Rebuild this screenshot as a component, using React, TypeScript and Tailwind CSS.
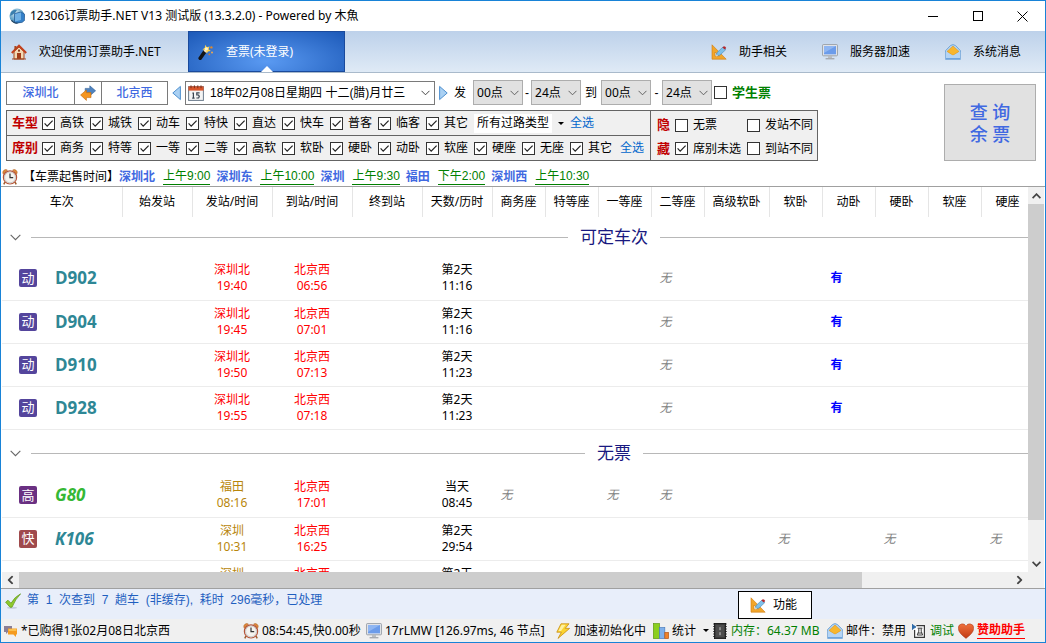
import React from 'react';

const UI_FONT = "font-['Noto_Sans','Noto_Sans_CJK_SC',sans-serif]";
const SONG_FONT = "font-['Liberation_Sans','Noto_Sans_CJK_SC',sans-serif]";

/* ---------- icons ---------- */

const GlobeIcon = () => (
  <svg className="size-4 shrink-0" viewBox="0 0 16 16">
    <defs>
      <radialGradient id="globe" cx="0.4" cy="0.3" r="0.8">
        <stop offset="0" stopColor="#d7ecf5" />
        <stop offset="0.6" stopColor="#5f9fc4" />
        <stop offset="1" stopColor="#1e5a8c" />
      </radialGradient>
    </defs>
    <circle cx="8" cy="8" r="7.5" fill="url(#globe)" />
    <path d="M2 4Q5 1 8 2L6 5 3 7 1 8Z" fill="#3b7fae" />
    <path d="M5.5 5.5 12 4l3.5 2v6.5L13 14.5l-7.5.3Z" fill="#3480c8" stroke="#1d4f86" strokeWidth="0.6" />
    <path d="M6 6 12 4.6V12L6 13.5Z" fill="#6fb0e4" />
    <path d="M3 12q2 3 6 3l-1 .8Q4 15.6 2 12.5Z" fill="#24415e" />
  </svg>
);

const HomeIcon = () => (
  <svg className="size-4 shrink-0" viewBox="0 0 16 16">
    <path d="M3 7.5 8 3l5 4.5V15H3Z" fill="#f3d9b4" stroke="#a8481f" strokeWidth="1" />
    <path d="M0.8 9 8 1.6 15.2 9" fill="none" stroke="#c2401c" strokeWidth="2" />
    <path d="M3.4 2h2v2.6l-2 2Z" fill="#a8481f" />
    <rect x="6" y="9" width="4" height="6" fill="#a33c18" />
    <rect x="7" y="5.6" width="2" height="2" fill="#8a3a1e" />
    <path d="M1 14.5h14v1H1Z" fill="#9c4a28" />
  </svg>
);

const WandIcon = () => (
  <svg className="size-4 shrink-0" viewBox="0 0 16 16">
    <path d="M2.2 14.2 7 7.4" stroke="#151515" strokeWidth="3.6" strokeLinecap="round" />
    <path d="M6.2 5.8 9 8" stroke="#f2e3c5" strokeWidth="2.4" />
    <path d="m7.2 0.8 1.6 2.4 2.8-.8-1 2.8 2.2 1.8-3 .4-.8 2L7.8 6 4.4 5.6l2.4-1.8Z" fill="#ffd24a" />
    <circle cx="8.4" cy="4.8" r="1.6" fill="#fff6cf" />
    <circle cx="13.4" cy="3.4" r="1.2" fill="#e08a2c" />
    <circle cx="14" cy="8.4" r="1" fill="#f0a94a" />
    <circle cx="11.4" cy="10.4" r="0.9" fill="#d8792a" />
  </svg>
);

const ToolsIcon = () => (
  <svg className="size-4 shrink-0" viewBox="0 0 16 16">
    <path d="M1 0.8 15.2 15.2H1Z M4 8v4.2h4.2Z" fill="#f2a62a" fillRule="evenodd" stroke="#cc7a12" strokeWidth="0.6" />
    <path d="m5.4 11.6.6-3L12 3l2.8 2.6-6 5.6Z" fill="#7fc0ea" stroke="#4186b8" strokeWidth="0.6" />
    <path d="m11.4 3.4 1.4-1.2q1.6-.2 2.4 1.8l-1.4 1.4Z" fill="#b3282d" />
    <path d="m5 12.4.6-2 1.4 1.4Z" fill="#f8e6c0" />
  </svg>
);

const MonitorIcon = () => (
  <svg className="size-4 shrink-0" viewBox="0 0 16 16">
    <rect x="0.6" y="0.6" width="14.8" height="11.2" rx="0.6" fill="#e9ebee" stroke="#9aa0a8" />
    <rect x="2" y="2" width="12" height="8.4" fill="#6c9cea" />
    <path d="M2 2h12L2 9Z" fill="#8fb6f2" />
    <path d="M6 12h4v2H6Z" fill="#b9bdc2" />
    <path d="M3.6 14h8.8v1.4H3.6Z" fill="#a6aab0" />
  </svg>
);

const MailIcon = () => (
  <svg className="size-4 shrink-0" viewBox="0 0 16 16">
    <path d="M0.6 6.6 5.4 1.6Q8 -.4 10.6 1.6l4.8 5v8.8H.6Z" fill="#b5d6f4" stroke="#6b9fd2" strokeWidth="0.9" />
    <path d="M2 7.4 8 2l6 5.4L8 11.4Z" fill="#f8b62d" stroke="#d98b12" strokeWidth="0.5" />
    <path d="M0.8 8 8 11.6 15.2 8v7.2H.8Z" fill="#b4d4f4" />
    <path d="M1 14h14v1.3H1Z" fill="#6fa4dc" />
  </svg>
);

const SwapIcon = () => (
  <svg className="size-4 shrink-0" viewBox="0 0 16 16">
    <path d="M5.2 3.4h4.6V.8l5.8 5-5.8 5V8.2H5.2Z" fill="#4f83bf" stroke="#2f5f98" strokeWidth="0.6" />
    <path d="M11 7.6H6.4V5L.6 10l5.8 5.4v-2.8H11Z" fill="#f5951f" stroke="#c56a0c" strokeWidth="0.6" />
  </svg>
);

const CalendarIcon = () => (
  <svg className="size-4 shrink-0" viewBox="0 0 16 16">
    <rect x="0.6" y="1.6" width="14.8" height="13.8" fill="#f4f4f4" stroke="#6c7c8c" />
    <path d="M0.4 1.4h15.2v4.2H.4Z" fill="#d9552a" />
    <path d="M3 .4v2.8M6.4 .4v2.8M9.8 .4v2.8M13 .4v2.8" stroke="#7a2d16" strokeWidth="1" />
    <path d="M5.4 7.4v6M4.4 8.2h1M4.2 13.2h2.4M11.6 7.8H8.8v2.2h1.8q1.4 1.6 0 3H8.4" fill="none" stroke="#38434f" strokeWidth="1.2" />
  </svg>
);

const TriangleIcon = ({ flip }: { flip?: boolean }) => (
  <svg className={flip ? 'h-4 w-[9px] shrink-0 rotate-180' : 'h-4 w-[9px] shrink-0'} viewBox="0 0 9 16">
    <path d="M8.4 1.4v13.2L.8 8Z" fill="#a9d0f3" stroke="#3f86c9" strokeWidth="0.9" />
  </svg>
);

const ClockIcon = () => (
  <svg className="size-4 shrink-0" viewBox="0 0 16 16">
    <path d="M1 4.6A3 3 0 0 1 5.4 1L1.6 5.2ZM15 4.6A3 3 0 0 0 10.6 1l3.8 4.2Z" fill="#e08a3a" stroke="#a85a1c" strokeWidth="0.5" />
    <path d="m3 13-1.2 2.4M13 13l1.2 2.4" stroke="#a06030" strokeWidth="1.6" />
    <circle cx="8" cy="8.4" r="6.6" fill="#f5f3ef" stroke="#b5553a" strokeWidth="1.2" />
    <circle cx="8" cy="8.4" r="5.4" fill="none" stroke="#b9b9b9" strokeWidth="0.7" />
    <path d="M8 4.4v4.2h3.2" fill="none" stroke="#333" strokeWidth="1.2" />
  </svg>
);

const TickIcon = () => (
  <svg className="size-4 shrink-0" viewBox="0 0 16 16">
    <ellipse cx="7" cy="14.8" rx="5" ry="1" fill="#c5cddd" />
    <path d="M.6 9.2 3 7.2l3 3Q10 3.6 15.6 .8 10.4 6 7 14.2H5Z" fill="#8fca2d" stroke="#5d9416" strokeWidth="0.7" />
  </svg>
);

const ChatIcon = () => (
  <svg className="h-3 w-[13px] shrink-0" viewBox="0 0 13 12">
    <path d="M0 1h8v6H4L2 9V7H0Z" fill="#8a7f96" />
    <path d="M4 3.4h9v6h-1V12L9.4 9.4H4Z" fill="#f59b1e" />
    <path d="M4.6 4h7.8v2H4.6Z" fill="#fbc04e" />
  </svg>
);

const BoltIcon = () => (
  <svg className="size-4 shrink-0" viewBox="0 0 16 16">
    <path d="M6 .8h8L10.2 5.4h4.4L3 15.4l3.4-6.2H1.8Z" fill="#fbd32f" stroke="#c98e12" strokeWidth="0.8" />
    <path d="M6.6 1.8h4L6 8H3.4Z" fill="#fdf0a0" />
  </svg>
);

const ChartIcon = () => (
  <svg className="size-4 shrink-0" viewBox="0 0 16 16">
    <rect x="0.4" y="0.6" width="6" height="15" fill="#8ccf1e" stroke="#5f9a12" strokeWidth="0.7" />
    <rect x="6.4" y="4.6" width="5.4" height="11" fill="#7fb0ea" stroke="#4a7cbc" strokeWidth="0.7" />
    <rect x="11.8" y="9.4" width="3.8" height="6.2" fill="#ef8228" stroke="#b8581a" strokeWidth="0.7" />
  </svg>
);

const ChipIcon = () => (
  <svg className="size-4 shrink-0" viewBox="0 0 16 16">
    <path d="M1 1h14M1 3.5h14M1 6h14M1 8.5h14M1 11h14M1 13.5h14" stroke="#555" strokeWidth="1.2" />
    <rect x="2.4" y="0.4" width="11.2" height="15.2" fill="#3a3a3a" stroke="#111" strokeWidth="0.8" />
    <rect x="3.8" y="2" width="8.4" height="12" fill="#4c4c4c" />
    <path d="M8 4.2v3M8 9.2v3" stroke="#c8c8c8" strokeWidth="1" />
  </svg>
);

const DebugIcon = () => (
  <svg className="h-4 w-3.5 shrink-0" viewBox="0 0 14 16">
    <path d="M4.4 2.6h8v11.8h-9.8V7" fill="#fff" stroke="#3a3a3a" strokeWidth="1.2" />
    <path d="M.4 1v6M.4 1.6 4 4 .4 6Z" fill="#2c6aa8" stroke="#2c6aa8" strokeWidth="0.8" />
    <path d="M5.6 5.2h4.8M6.8 5.4v2.8L5.2 12h5.4L9.2 8.2V5.4M6 10h4" fill="none" stroke="#3a3a3a" />
  </svg>
);

const HeartIcon = () => (
  <svg className="size-4 shrink-0" viewBox="0 0 16 16">
    <defs>
      <linearGradient id="heart" x1="0" y1="0" x2="0" y2="1">
        <stop offset="0" stopColor="#f0713c" />
        <stop offset="1" stopColor="#c03a14" />
      </linearGradient>
    </defs>
    <path d="M8 15.4C3 11.6.4 8.6.4 5.4A4 4 0 0 1 8 3.2a4 4 0 0 1 7.6 2.2c0 3.2-2.6 6.2-7.6 10Z" fill="url(#heart)" stroke="#a83a1a" strokeWidth="0.5" />
  </svg>
);

const Chevron = ({ className, width = 1 }: { className: string; width?: number }) => (
  <svg className={className} viewBox="0 0 10 6" fill="none" stroke="currentColor" strokeWidth={width}>
    <path d="m0.6 0.6 4.4 4.4 4.4-4.4" />
  </svg>
);

/* ---------- small controls ---------- */

const CheckItem = ({
  label,
  checked,
  className = '',
}: {
  label: string;
  checked?: boolean;
  className?: string;
}) => (
  <label className={`flex shrink-0 items-center gap-[5px] whitespace-nowrap ${className}`}>
    <span className="grid shrink-0">
      <input
        type="checkbox"
        defaultChecked={checked}
        className="peer col-start-1 row-start-1 size-[13px] appearance-none border border-[#333] bg-white"
      />
      <svg
        className="pointer-events-none invisible col-start-1 row-start-1 size-[13px] peer-checked:visible"
        viewBox="0 0 13 13"
        fill="none"
        stroke="#222"
        strokeWidth="1.2"
      >
        <path d="m2.6 6.4 2.6 2.8 5.4-5.6" />
      </svg>
    </span>
    {label}
  </label>
);

const HourSelect = ({ value, label }: { value: string; label: string }) => (
  <span className={`grid h-[25px] w-[50px] shrink-0 items-center ${UI_FONT}`}>
    <select
      aria-label={label}
      className="col-start-1 row-start-1 h-full w-full appearance-none border border-[#adadad] bg-[#e1e1e1] pl-[3px] text-xs text-black"
    >
      <option>{value}</option>
    </select>
    <Chevron className="pointer-events-none col-start-1 row-start-1 mr-1 h-[6px] w-[9px] justify-self-end text-[#555]" />
  </span>
);

/* ---------- data ---------- */

const trainTypes = ['高铁', '城铁', '动车', '特快', '直达', '快车', '普客', '临客', '其它'];
const seatTypes = ['商务', '特等', '一等', '二等', '高软', '软卧', '硬卧', '动卧', '软座', '硬座', '无座', '其它'];

const saleTimes = [
  ['深圳北', '上午9:00'],
  ['深圳东', '上午10:00'],
  ['深圳', '上午9:30'],
  ['福田', '下午2:00'],
  ['深圳西', '上午10:30'],
];

const columns = [
  { title: '车次', width: 'w-[120px]' },
  { title: '始发站', width: 'w-[70px]' },
  { title: '发站/时间', width: 'w-[80px]' },
  { title: '到站/时间', width: 'w-[80px]' },
  { title: '终到站', width: 'w-[70px]' },
  { title: '天数/历时', width: 'w-[70px]' },
  { title: '商务座', width: 'w-[53px]' },
  { title: '特等座', width: 'w-[53px]' },
  { title: '一等座', width: 'w-[53px]' },
  { title: '二等座', width: 'w-[53px]' },
  { title: '高级软卧', width: 'w-[65px]' },
  { title: '软卧', width: 'w-[53px]' },
  { title: '动卧', width: 'w-[53px]' },
  { title: '硬卧', width: 'w-[53px]' },
  { title: '软座', width: 'w-[53px]' },
  { title: '硬座', width: 'w-[53px]' },
  { title: '', width: '' },
];

const seatColumns = columns.slice(6, 16).map((c) => c.title);

interface Train {
  no: string;
  badge: string;
  badgeColor: string;
  noColor: string;
  from: [string, string];
  fromColor: string;
  to: [string, string];
  duration: [string, string];
  seats: Record<string, string>;
}

const dTrain = (no: string, depart: string, arrive: string, time: string): Train => ({
  no,
  badge: '动',
  badgeColor: 'bg-[#54459c]',
  noColor: 'text-[#2e8795]',
  from: ['深圳北', depart],
  fromColor: 'text-[#ff0000]',
  to: ['北京西', arrive],
  duration: ['第2天', time],
  seats: { 二等座: '无', 动卧: '有' },
});

const available: Train[] = [
  dTrain('D902', '19:40', '06:56', '11:16'),
  dTrain('D904', '19:45', '07:01', '11:16'),
  dTrain('D910', '19:50', '07:13', '11:23'),
  dTrain('D928', '19:55', '07:18', '11:23'),
];

const soldOut: Train[] = [
  {
    no: 'G80',
    badge: '高',
    badgeColor: 'bg-[#6a3082]',
    noColor: 'text-[#35b835] italic',
    from: ['福田', '08:16'],
    fromColor: 'text-[#b8860b]',
    to: ['北京西', '17:01'],
    duration: ['当天', '08:45'],
    seats: { 商务座: '无', 一等座: '无', 二等座: '无' },
  },
  {
    no: 'K106',
    badge: '快',
    badgeColor: 'bg-[#a04a4c]',
    noColor: 'text-[#2e8795] italic',
    from: ['深圳', '10:31'],
    fromColor: 'text-[#b8860b]',
    to: ['北京西', '16:25'],
    duration: ['第2天', '29:54'],
    seats: { 软卧: '无', 硬卧: '无', 硬座: '无' },
  },
  {
    no: '',
    badge: '',
    badgeColor: '',
    noColor: '',
    from: ['深圳', ''],
    fromColor: 'text-[#b8860b]',
    to: ['北京西', ''],
    duration: ['第2天', ''],
    seats: {},
  },
];

/* ---------- table ---------- */

const TwoLines = ({ lines, className = '' }: { lines: [string, string]; className?: string }) => (
  <td className={`p-0 text-center ${className}`}>
    <div className="h-8 leading-4">
      {lines[0]}
      <br />
      {lines[1]}
    </div>
  </td>
);

const GroupRow = ({ title, className }: { title: string; className: string }) => (
  <tr>
    <td colSpan={columns.length} className={`p-0 ${className}`}>
      <div className="flex items-center pr-[13px] pl-2">
        <Chevron className="mr-[10px] h-[7px] w-[11px] text-[#666]" />
        <span className="h-px flex-1 bg-[#b8b8b8]" />
        <h2 className="mx-3 text-[17px] leading-6 text-[#191980]">{title}</h2>
        <span className="h-px flex-1 bg-[#b8b8b8]" />
      </div>
    </td>
  </tr>
);

const TrainRow = ({ train }: { train: Train }) => (
  <tr className="h-[43px] border-b border-[#ececec]">
    <td className="p-0">
      <div className="flex items-center gap-[18px] pl-[17px]">
        {train.badge && (
          <span className={`flex size-[18px] items-center justify-center rounded-xs text-[13px] leading-none text-white ${train.badgeColor}`}>
            {train.badge}
          </span>
        )}
        <span className={`font-['Open_Sans',sans-serif] text-[17px] leading-5 font-bold ${train.noColor}`}>{train.no}</span>
      </div>
    </td>
    <td />
    <TwoLines lines={train.from} className={train.fromColor} />
    <TwoLines lines={train.to} className="text-[#ff0000]" />
    <td />
    <TwoLines lines={train.duration} />
    {seatColumns.map((seat) => (
      <td
        key={seat}
        className={`p-0 pr-6 text-center ${train.seats[seat] === '有' ? 'font-bold text-[#0000ff]' : 'text-[#808080] italic'}`}
      >
        {train.seats[seat]}
      </td>
    ))}
    <td />
  </tr>
);

const TrainTable = () => (
  <table className="w-full min-w-[1208px] table-fixed border-collapse text-xs">
    <thead>
      <tr className="h-[30px]">
        {columns.map((c, i) => (
          <th
            key={i}
            className={`p-0 font-normal whitespace-nowrap ${c.title ? 'border-r border-[#e5e5e5]' : ''} ${c.width}`}
          >
            {c.title}
          </th>
        ))}
      </tr>
    </thead>
    <tbody>
      <GroupRow title="可定车次" className="h-10" />
      {available.map((t) => (
        <TrainRow key={t.no} train={t} />
      ))}
      <GroupRow title="无票" className="h-[45px] pt-[3px]" />
      {soldOut.map((t) => (
        <TrainRow key={t.no} train={t} />
      ))}
    </tbody>
  </table>
);

/* ---------- page sections ---------- */

const TitleBar = () => (
  <header className="flex h-[30px] shrink-0 items-center bg-white pl-2">
    <GlobeIcon />
    <h1 className="ml-[5px] flex-1 truncate text-xs">12306订票助手.NET V13 测试版 (13.3.2.0) - Powered by 木魚</h1>
    <button aria-label="最小化" className="flex h-full w-[45px] items-center justify-center">
      <span className="h-px w-[10px] bg-black" />
    </button>
    <button aria-label="最大化" className="flex h-full w-[45px] items-center justify-center">
      <span className="size-[10px] border border-black" />
    </button>
    <button aria-label="关闭" className="flex h-full w-[45px] items-center justify-center">
      <svg className="size-[11px]" viewBox="0 0 11 11" stroke="#000">
        <path d="m.5.5 10 10M10.5.5l-10 10" />
      </svg>
    </button>
  </header>
);

const NavBar = () => (
  <nav className="flex h-[42px] shrink-0 items-stretch border-b border-[#a9bacb] bg-linear-to-b from-[#bdd1ea] to-[#dfeaf6] text-xs whitespace-nowrap">
    <button className="flex w-[187px] items-center gap-3 pl-[10px]">
      <HomeIcon />
      欢迎使用订票助手.NET
    </button>
    <button className="relative flex w-[157px] items-center gap-3 border border-[#1a4a9c] bg-radial-[at_50%_75%] from-[#5a9af2] to-[#1c59b8] pl-[9px] text-white">
      <WandIcon />
      查票(未登录)
      <svg className="absolute bottom-[-1px] left-[72px] h-[6px] w-[12px]" viewBox="0 0 12 6">
        <path d="m0 6 6-6 6 6Z" fill="#fff" />
      </svg>
    </button>
    <div className="ml-auto flex gap-[35px] pr-6">
      <button className="flex items-center gap-3">
        <ToolsIcon />
        助手相关
      </button>
      <button className="flex items-center gap-3">
        <MonitorIcon />
        服务器加速
      </button>
      <button className="flex items-center gap-3">
        <MailIcon />
        系统消息
      </button>
    </div>
  </nav>
);

const SearchRow = () => (
  <div className="flex h-[25px] items-center whitespace-nowrap">
    <div className="flex h-6 border border-[#7a7a7a] font-medium text-[#4169e1]">
      <button className="w-[67px]">深圳北</button>
      <button aria-label="交换" className="flex w-7 items-center justify-center border-x border-[#7a7a7a]">
        <SwapIcon />
      </button>
      <button className="w-[65px]">北京西</button>
    </div>
    <button aria-label="前一天" className="ml-1 flex">
      <TriangleIcon />
    </button>
    <div className="ml-1 flex h-6 w-[250px] items-center border border-[#7a7a7a] pl-[2px]">
      <CalendarIcon />
      <span className="ml-[6px] grid flex-1 items-center">
        <select aria-label="日期" className="col-start-1 row-start-1 w-full appearance-none bg-transparent">
          <option>18年02月08日星期四 十二(腊)月廿三</option>
        </select>
        <Chevron className="pointer-events-none col-start-1 row-start-1 mr-1 h-[6px] w-[9px] justify-self-end text-[#333]" />
      </span>
    </div>
    <button aria-label="后一天" className="ml-1 flex">
      <TriangleIcon flip />
    </button>
    <span className="mr-[7px] ml-[6px]">发</span>
    <HourSelect label="发车起" value="00点" />
    <span className="w-2 text-center">-</span>
    <HourSelect label="发车止" value="24点" />
    <span className="w-5 text-center">到</span>
    <HourSelect label="到达起" value="00点" />
    <span className="w-[11px] text-center">-</span>
    <HourSelect label="到达止" value="24点" />
    <CheckItem label="学生票" className="ml-[2px] text-[13px] font-bold text-[#008000]" />
  </div>
);

const FilterPanel = () => (
  <div className="mt-[5px] flex w-[812px] border border-[#646464] bg-[#f0f0f0]">
    <div className="w-[644px] border-r border-[#646464]">
      <div className="flex h-[25px] items-center border-b border-[#646464]">
        <b className="w-[35px] pl-[5px] text-[13px] text-[#c00000]">车型</b>
        {trainTypes.map((t) => (
          <CheckItem key={t} label={t} checked className="w-12" />
        ))}
        <span className="grid w-[94px] shrink-0 items-center">
          <select aria-label="过路类型" className="col-start-1 row-start-1 h-[19px] w-[78px] appearance-none bg-white pl-[3px]">
            <option>所有过路类型</option>
          </select>
          <svg className="pointer-events-none col-start-1 row-start-1 mr-1 h-[3px] w-[6px] justify-self-end" viewBox="0 0 6 3">
            <path d="M0 0h6L3 3Z" />
          </svg>
        </span>
        <a href="#" className="ml-[2px] text-[#0066cc]">全选</a>
      </div>
      <div className="flex h-6 items-center">
        <b className="w-[35px] pl-[5px] text-[13px] text-[#c00000]">席别</b>
        {seatTypes.map((t) => (
          <CheckItem key={t} label={t} checked className="w-12" />
        ))}
        <a href="#" className="ml-[2px] text-[#0066cc]">全选</a>
      </div>
    </div>
    <div className="flex-1 pt-[2px] pl-[6px]">
      <div className="flex h-6 items-center">
        <b className="w-[18px] text-[13px] text-[#c00000]">隐</b>
        <CheckItem label="无票" className="w-[72px]" />
        <CheckItem label="发站不同" />
      </div>
      <div className="flex h-[23px] items-center">
        <b className="w-[18px] text-[13px] text-[#c00000]">藏</b>
        <CheckItem label="席别未选" checked className="w-[72px]" />
        <CheckItem label="到站不同" />
      </div>
    </div>
  </div>
);

const SaleTimes = () => (
  <div className="flex h-[25px] shrink-0 items-end pb-px pl-px text-xs leading-4 whitespace-nowrap">
    <ClockIcon />
    <span className="ml-[5px]">【车票起售时间】</span>
    {saleTimes.map(([station, time]) => (
      <React.Fragment key={station}>
        <b className="mr-2 text-[#4169e1]">{station}</b>
        <a href="#" className="mr-[6px] border-b border-[#008000] text-[#008000]">
          {time}
        </a>
      </React.Fragment>
    ))}
  </div>
);

const ScrollView = ({ children }: { children: React.ReactNode }) => (
  <main className="flex min-h-0 flex-1 flex-col border-y border-[#a0a0a0] px-px">
    <div className="flex min-h-0 flex-1">
      <div className="min-w-0 flex-1 overflow-hidden">{children}</div>
      <div className="flex w-4 flex-col bg-[#f0f0f0]">
        <button aria-label="向上" className="flex h-[17px] items-center justify-center">
          <Chevron className="h-[6px] w-[9px] rotate-180 text-[#444]" width={2} />
        </button>
        <div className="flex-[9] bg-[#cdcdcd]" />
        <div className="flex-1" />
        <button aria-label="向下" className="flex h-[17px] items-center justify-center">
          <Chevron className="h-[6px] w-[9px] text-[#444]" width={2} />
        </button>
      </div>
    </div>
    <div className="flex h-4 shrink-0 bg-[#f0f0f0] pr-4">
      <button aria-label="向左" className="flex w-[17px] items-center justify-center">
        <Chevron className="h-[6px] w-[9px] rotate-90 text-[#444]" width={2} />
      </button>
      <div className="flex-[85] bg-[#cdcdcd]" />
      <div className="flex-[15]" />
      <button aria-label="向右" className="flex w-[17px] items-center justify-center">
        <Chevron className="h-[6px] w-[9px] -rotate-90 text-[#444]" width={2} />
      </button>
    </div>
  </main>
);

const MessageBar = () => (
  <div className={`flex h-[30px] shrink-0 bg-[#e8eefa] pl-1 text-xs whitespace-nowrap ${SONG_FONT}`}>
    <span className="mt-1">
      <TickIcon />
    </span>
    <p className="mt-px ml-[6px] leading-5 whitespace-pre text-[#1f5fc0]">第  1  次查到  7  趟车  (非缓存),  耗时  296毫秒，已处理</p>
    <button className={`mt-[2px] mr-[233px] ml-auto flex w-[74px] items-center gap-[7px] border border-black bg-white pl-[11px] text-black ${UI_FONT}`}>
      <ToolsIcon />
      功能
    </button>
  </div>
);

const StatusBar = () => (
  <footer className="flex h-[23px] shrink-0 items-center bg-[#f0f0f0] pl-[3px] text-xs whitespace-nowrap">
    <div className="flex flex-1 items-center gap-1">
      <ChatIcon />
      *已购得1张02月08日北京西
    </div>
    <div className="flex w-[123px] items-center gap-[3px]">
      <ClockIcon />
      08:54:45,快0.00秒
    </div>
    <div className="flex w-[189px] items-center gap-[3px]">
      <MonitorIcon />
      17rLMW [126.97ms, 46 节点]
    </div>
    <div className="flex w-[98px] items-center gap-[3px]">
      <BoltIcon />
      加速初始化中
    </div>
    <button className="flex w-[59px] items-center gap-[3px]">
      <ChartIcon />
      统计
      <svg className="ml-1 h-[3px] w-[6px]" viewBox="0 0 6 3">
        <path d="M0 0h6L3 3Z" />
      </svg>
    </button>
    <div className="flex w-[115px] items-center gap-[3px] text-[#008000]">
      <ChipIcon />
      内存：64.37 MB
    </div>
    <div className="flex w-[85px] items-center gap-[3px]">
      <MailIcon />
      邮件：禁用
    </div>
    <button className="flex w-[46px] items-center gap-1 text-[#008000]">
      <DebugIcon />
      调试
    </button>
    <a href="#" className="flex w-[87px] items-center gap-[3px] text-[#ff0000]">
      <HeartIcon />
      <b className="border-b border-[#ff0000] leading-4">赞助助手</b>
    </a>
  </footer>
);

export default function App() {
  return (
    <div className={`flex h-screen flex-col overflow-hidden border border-[#1883d7] bg-white text-black ${UI_FONT}`}>
      <TitleBar />
      <NavBar />
      <section className={`flex shrink-0 items-start justify-between pt-[7px] pr-[9px] pl-[5px] text-xs ${SONG_FONT}`}>
        <div>
          <SearchRow />
          <FilterPanel />
        </div>
        <button className={`mt-1 h-[77px] w-[92px] border border-[#adadad] bg-[#e1e1e1] text-lg leading-[22px] font-medium text-[#4169e1] ${UI_FONT}`}>
          查 询
          <br />余 票
        </button>
      </section>
      <div className={SONG_FONT}>
        <SaleTimes />
      </div>
      <ScrollView>
        <TrainTable />
      </ScrollView>
      <MessageBar />
      <StatusBar />
    </div>
  );
}
